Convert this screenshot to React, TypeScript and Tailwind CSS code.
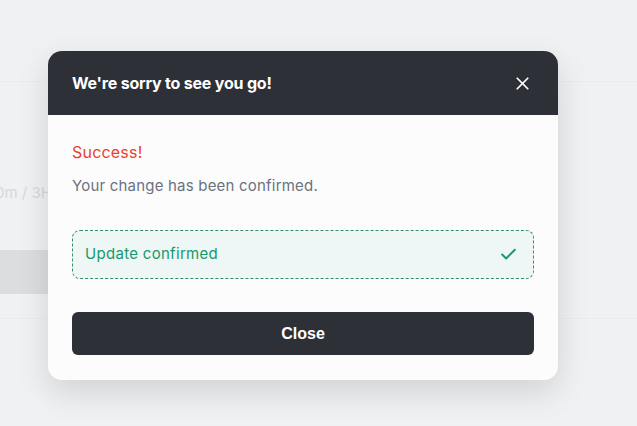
import { X, Check } from "lucide-react";

export default function App() {
  return (
    <div className="relative min-h-[426px] w-full overflow-hidden bg-[#f0f1f3] font-['Inter',sans-serif]">
      {/* Page behind the dialog */}
      <div className="h-[82px] border-b border-[#ebecef]" />
      <div className="pt-[100px]">
        <p className="-ml-[5px] text-[15px] text-[#d6d8dc]">0m / 3H</p>
      </div>
      <div className="mt-[45px] h-[44px] w-[300px] bg-[#dcdddf]" />
      <div className="mt-[24px] border-b border-[#ebecef]" />

      {/* Dialog */}
      <div className="absolute left-[48px] top-[51px] w-[510px] overflow-hidden rounded-[14px] bg-[#fcfcfc] shadow-[0_12px_32px_rgba(0,0,0,0.13)]">
        <div className="flex h-[64px] items-center justify-between bg-[#2e3038] pl-[24px] pr-[25px]">
          <h2 className="text-[16px] font-bold tracking-[-0.2px] text-white">We're sorry to see you go!</h2>
          <button className="text-white" aria-label="Close">
            <X className="h-[21px] w-[21px]" strokeWidth={2} />
          </button>
        </div>
        <div className="px-[24px] pb-[25px] pt-[26px]">
          <p className="text-[16px] leading-[22px] tracking-[0.2px] text-[#e8412a]">Success!</p>
          <p className="mt-[12px] text-[15px] leading-[22px] tracking-[0.2px] text-[#6b7280]">Your change has been confirmed.</p>
          <div className="mt-[33px] flex h-[49px] items-center justify-between rounded-[8px] border border-dashed border-[#3a8a6e] bg-[#eef7f5] pl-[12px] pr-[15px]">
            <span className="text-[15px] tracking-[0.3px] text-[#16996a]">Update confirmed</span>
            <Check className="h-[19px] w-[19px] text-[#16996a]" strokeWidth={2.5} />
          </div>
          <button className="mt-[33px] flex h-[43px] w-full items-center justify-center rounded-[6px] bg-[#2e3038] font-['Liberation_Sans',sans-serif] text-[16px] font-bold text-white">
            Close
          </button>
        </div>
      </div>
    </div>
  );
}
